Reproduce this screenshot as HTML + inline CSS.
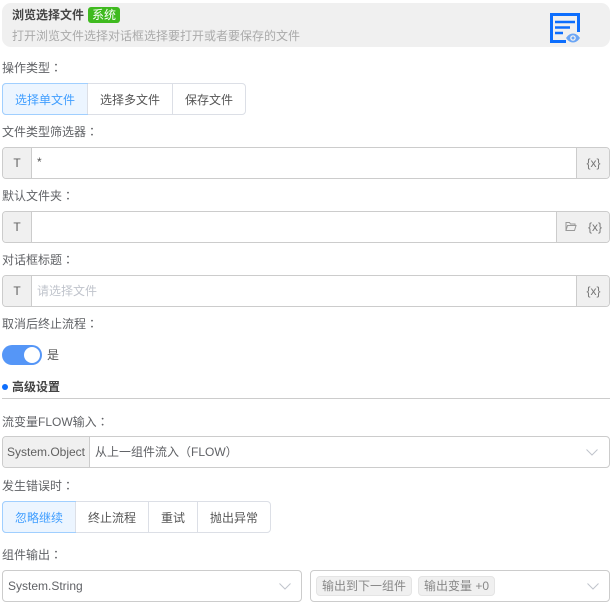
<!DOCTYPE html>
<html>
<head>
<meta charset="utf-8">
<style>
html,body{margin:0;padding:0;background:#fff;}
body{width:613px;height:604px;position:relative;overflow:hidden;font-family:"Liberation Sans","Noto Sans CJK SC",sans-serif;font-size:12px;color:#606266;}
.a{position:absolute;white-space:nowrap;}
.l{position:absolute;left:2px;height:16px;line-height:16px;white-space:nowrap;color:#606266;}
.c{font-family:"Noto Sans CJK TC",sans-serif;}
.box{position:absolute;box-sizing:border-box;border:1px solid #ccc;border-radius:4px;background:#fff;}
.pre{position:absolute;left:0;top:0;bottom:0;box-sizing:border-box;background:#f0f0f0;border-right:1px solid #ccc;border-radius:3px 0 0 3px;text-align:center;line-height:31px;color:#606060;}
.suf{position:absolute;right:0;top:0;bottom:0;box-sizing:border-box;background:#f0f0f0;border-left:1px solid #ccc;border-radius:0 3px 3px 0;line-height:30px;color:#777;font-size:12px;}
.grp{position:absolute;height:32px;box-sizing:border-box;border:1px solid #dcdfe6;border-radius:4px;background:#fff;display:flex;}
.grp div{box-sizing:border-box;height:30px;line-height:32px;overflow:hidden;text-align:center;color:#555;border-left:1px solid #dcdfe6;}
.grp div.on{background:#ecf5ff;color:#409eff;border-left:0;outline:1px solid #a0cfff;outline-offset:0;border-radius:3px 0 0 3px;}
.arrow{position:absolute;width:12px;height:7px;}
.tag{position:absolute;top:5px;height:20px;background:#f0f0f0;border:1px solid #e4e4e4;border-radius:4px;box-sizing:border-box;color:#888;text-align:center;line-height:18px;}
</style>
</head>
<body>
<div class="a" style="left:2px;top:3px;width:608px;height:44px;background:#f0f0f0;border-radius:9px;"></div>
<div class="a" style="left:12px;top:7px;line-height:16px;font-weight:bold;color:#444;">浏览选择文件</div>
<div class="a" style="left:88px;top:7px;width:32px;height:16px;line-height:16px;background:#3fba1f;border-radius:3px;color:#fff;text-align:center;">系统</div>
<div class="a" style="left:12px;top:28px;line-height:16px;color:#aaa;">打开浏览文件选择对话框选择要打开或者要保存的文件</div>
<svg class="a" style="left:548px;top:11px;" width="36" height="36" viewBox="0 0 36 36">
<path d="M30.500 21V3.500H3.500V30.500H18" fill="none" stroke="#0d6efd" stroke-width="3"/>
<path d="M7 11H27M7 16.500H22M7 22H15" fill="none" stroke="#0d6efd" stroke-width="2.400"/>
<path d="M18 27C20 24 22.500 22.500 25 22.500C27.500 22.500 30 24 32 27C30 30 27.500 31.500 25 31.500C22.500 31.500 20 30 18 27Z" fill="#6aa5f5"/>
<circle cx="25" cy="27" r="2.800" fill="#f0f0f0"/><circle cx="25" cy="27" r="1.500" fill="#6aa5f5"/>
</svg>

<div class="l" style="top:60px;">操作类型<span class="c">：</span></div>
<div class="grp" style="left:2px;top:83px;width:244px;">
<div class="on" style="width:84px;">选择单文件</div><div style="width:85px;">选择多文件</div><div style="width:73px;">保存文件</div>
</div>

<div class="l" style="top:124px;">文件类型筛选器<span class="c">：</span></div>
<div class="box" style="left:2px;top:147px;width:608px;height:32px;">
<div class="pre" style="width:29px;">T</div>
<div class="a" style="left:34px;top:0;line-height:28px;color:#555;">*</div>
<div class="suf" style="width:33px;text-align:center;padding-left:1px;">{x}</div>
</div>

<div class="l" style="top:188px;">默认文件夹<span class="c">：</span></div>
<div class="box" style="left:2px;top:211px;width:608px;height:32px;">
<div class="pre" style="width:29px;">T</div>
<div class="suf" style="width:53px;">
<svg class="a" style="left:8px;top:9px;" width="12" height="11" viewBox="0 0 12 11"><path d="M1 9.500V1.500H4.500L5.500 3H10V4.500M1 9.500H9.500L11 4.500H2.500L1 9.500Z" fill="none" stroke="#999" stroke-width="1"/></svg>
<span class="a" style="left:31px;top:0;">{x}</span>
</div>
</div>

<div class="l" style="top:252px;">对话框标题<span class="c">：</span></div>
<div class="box" style="left:2px;top:275px;width:608px;height:32px;">
<div class="pre" style="width:29px;">T</div>
<div class="a" style="left:34px;top:0;line-height:30px;color:#c0c4cc;">请选择文件</div>
<div class="suf" style="width:33px;text-align:center;padding-left:1px;">{x}</div>
</div>

<div class="l" style="top:316px;">取消后终止流程<span class="c">：</span></div>
<div class="a" style="left:2px;top:345px;width:40px;height:20px;border-radius:10px;background:#5596f7;"></div>
<div class="a" style="left:24px;top:347px;width:16px;height:16px;border-radius:50%;background:#fff;"></div>
<div class="a" style="left:47px;top:347px;line-height:16px;color:#555;">是</div>

<div class="a" style="left:2px;top:384px;width:6px;height:6px;border-radius:50%;background:#0d6efd;"></div>
<div class="a" style="left:12px;top:379px;line-height:16px;font-weight:bold;color:#444;">高级设置</div>
<div class="a" style="left:2px;top:398px;width:608px;height:1px;background:#ccc;"></div>

<div class="l" style="top:414px;">流变量FLOW输入<span class="c">：</span></div>
<div class="box" style="left:2px;top:436px;width:608px;height:32px;">
<div class="pre" style="width:87px;">System.Object</div>
<div class="a" style="left:92px;top:0;line-height:30px;color:#606266;">从上一组件流入（FLOW）</div>
<svg class="arrow" style="left:583px;top:12px;" viewBox="0 0 12 7"><path d="M.5.500L6 6L11.500.500" fill="none" stroke="#c0c4cc"/></svg>
</div>

<div class="l" style="top:478px;">发生错误时<span class="c">：</span></div>
<div class="grp" style="left:2px;top:501px;width:269px;">
<div class="on" style="width:72px;">忽略继续</div><div style="width:73px;">终止流程</div><div style="width:49px;">重试</div><div style="width:73px;">抛出异常</div>
</div>

<div class="l" style="top:547px;">组件输出<span class="c">：</span></div>
<div class="box" style="left:2px;top:570px;width:300px;height:32px;">
<div class="a" style="left:5px;top:0;line-height:30px;color:#606266;">System.String</div>
<svg class="arrow" style="left:276px;top:12px;" viewBox="0 0 12 7"><path d="M.5.500L6 6L11.500.500" fill="none" stroke="#c0c4cc"/></svg>
</div>
<div class="box" style="left:310px;top:570px;width:300px;height:32px;">
<div class="tag" style="left:5px;width:96px;">输出到下一组件</div>
<div class="tag" style="left:107px;width:77px;">输出变量 +0</div>
<svg class="arrow" style="left:276px;top:12px;" viewBox="0 0 12 7"><path d="M.5.500L6 6L11.500.500" fill="none" stroke="#c0c4cc"/></svg>
</div>
</body>
</html>
